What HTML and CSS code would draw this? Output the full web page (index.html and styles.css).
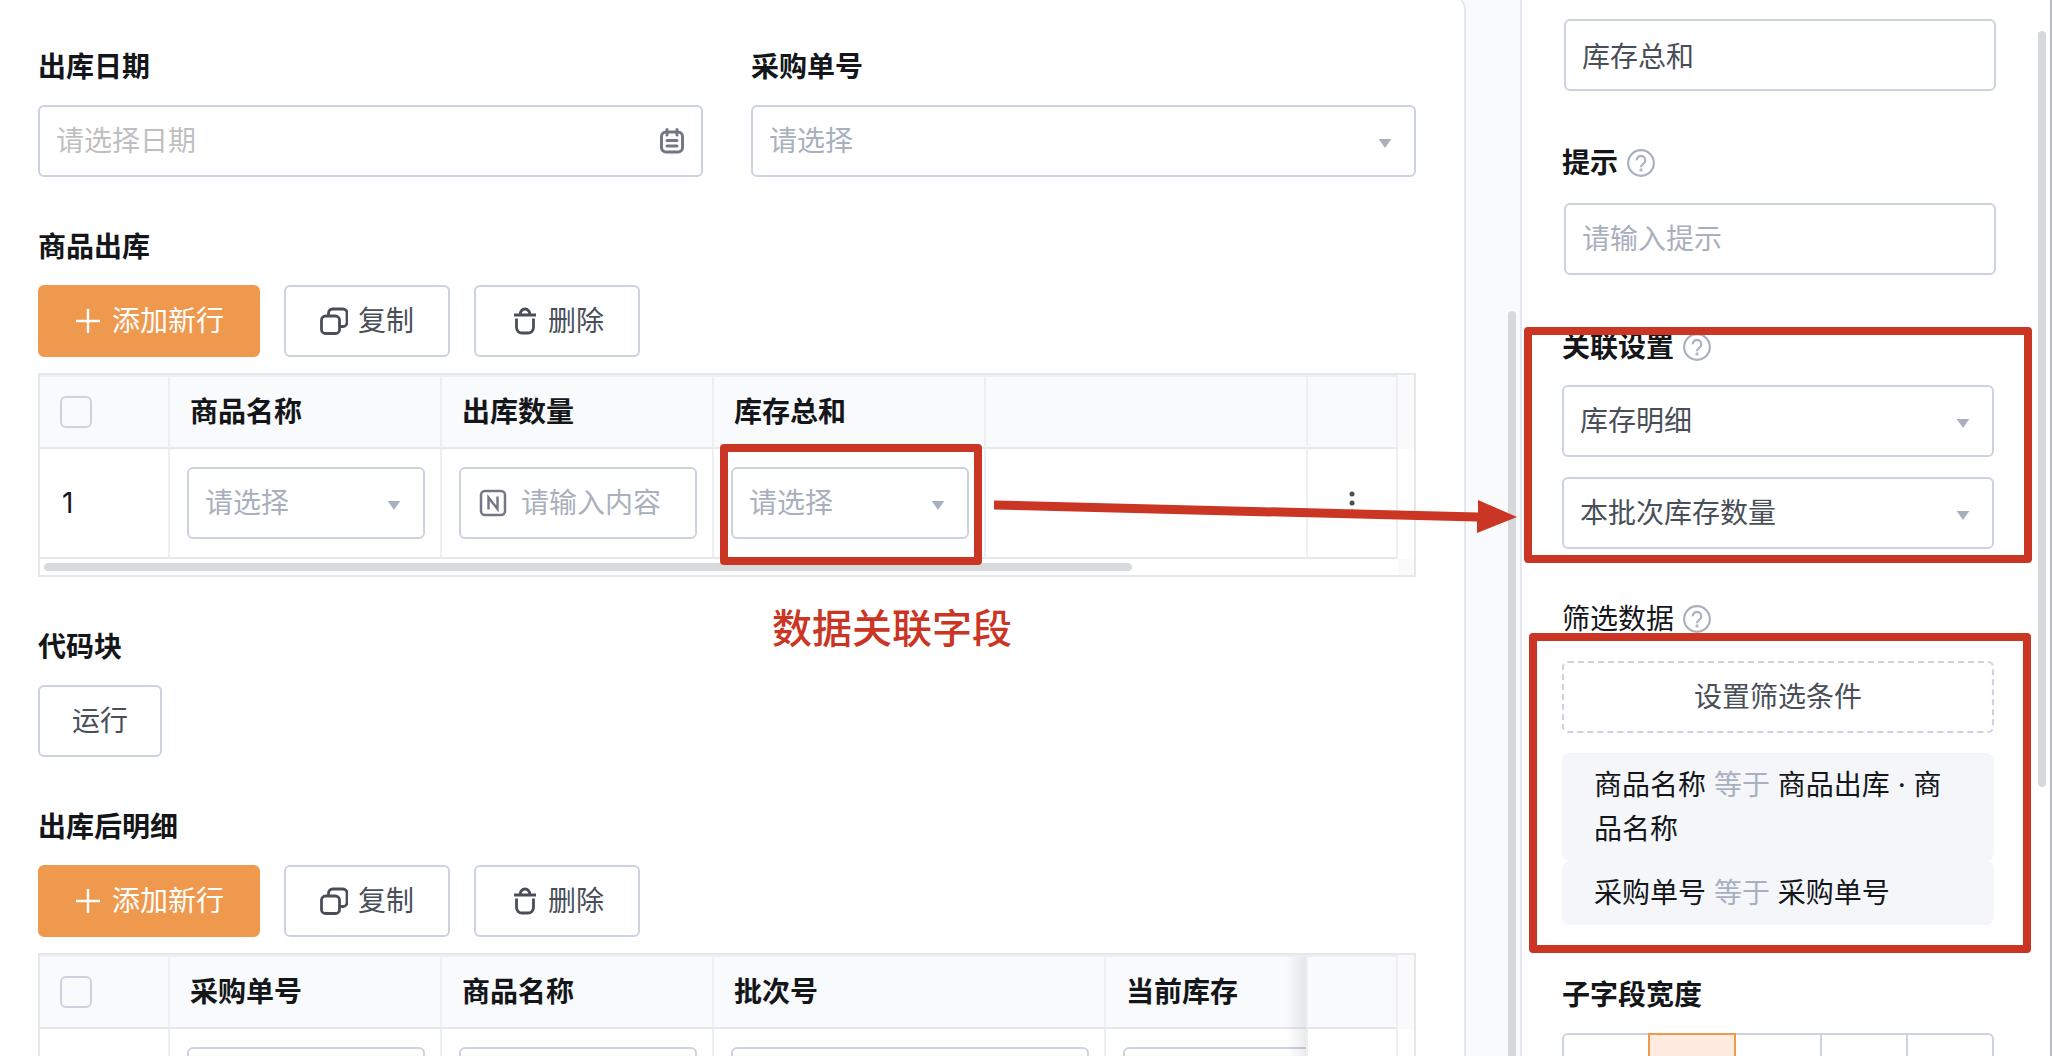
FILE: index.html
```html
<!DOCTYPE html>
<html lang="zh-CN">
<head>
  <meta charset="UTF-8">
  <meta name="viewport" content="width=device-width, initial-scale=1.0">
  <title>商品出库</title>
  <link rel="stylesheet" href="styles.css">
</head>
<body>
  <!-- shared icons -->
  <svg class="icon-defs" aria-hidden="true">
    <symbol id="icon-plus" viewBox="0 0 28 28">
      <path d="M14 2v24M2 14h24" stroke-width="2.4" />
    </symbol>
    <symbol id="icon-copy" viewBox="0 0 28 28">
      <rect x="1.5" y="9" width="18" height="17.500" rx="4" />
      <path d="M8.500 9V6a4 4 0 0 1 4-4H23a4 4 0 0 1 4 4v9.500a4 4 0 0 1-4 4h-3.500" />
    </symbol>
    <symbol id="icon-trash" viewBox="0 0 28 28">
      <path d="M4 8h22M10 8a5 6 0 0 1 10 0M6.500 11.500v9a5.500 5.500 0 0 0 5.500 5.500h6a5.500 5.500 0 0 0 5.500-5.500v-9" />
    </symbol>
    <symbol id="icon-date" viewBox="0 0 28 28">
      <rect x="3.5" y="5" width="21" height="20" rx="4.500" />
      <path d="M9 2.500v5.500M19 2.500v5.500M9 13.500h10M9 19h10" stroke-linecap="round" />
    </symbol>
    <symbol id="icon-number" viewBox="0 0 28 28">
      <rect x="2" y="2" width="24" height="24" rx="4" />
      <path d="M9.500 20.500V8.500l9 11.500V7.500" stroke-width="2.400" />
    </symbol>
    <symbol id="icon-help" viewBox="0 0 28 28">
      <circle cx="14" cy="14" r="12" />
      <path d="M10 11.500a4 4 0 1 1 6.500 3c-1.500 1.200-2.500 1.800-2.500 3.500" />
      <circle cx="14" cy="20.500" r="0.500" />
    </symbol>
    <symbol id="icon-caret" viewBox="0 0 14 10">
      <path d="M0 0h14L7 10z" />
    </symbol>
  </svg>

  <main class="workspace">
    <form class="form-card">
      <div class="field-row">
        <div class="field">
          <label class="field-label" for="out-date">出库日期</label>
          <div class="control">
            <input class="input input-date" id="out-date" type="text" placeholder="请选择日期">
            <svg class="date-icon"><use href="#icon-date" /></svg>
          </div>
        </div>
        <div class="field">
          <label class="field-label" for="purchase-no">采购单号</label>
          <div class="control">
            <select class="input select is-empty" id="purchase-no">
              <option>请选择</option>
            </select>
            <svg class="caret"><use href="#icon-caret" /></svg>
          </div>
        </div>
      </div>

      <section class="field">
        <h2 class="field-label">商品出库</h2>
        <div class="toolbar">
          <button type="button" class="btn btn-primary"><svg class="btn-icon"><use href="#icon-plus" /></svg>添加新行</button>
          <button type="button" class="btn"><svg class="btn-icon"><use href="#icon-copy" /></svg>复制</button>
          <button type="button" class="btn"><svg class="btn-icon"><use href="#icon-trash" /></svg>删除</button>
        </div>
        <div class="subform">
          <table class="subform-table">
            <colgroup>
              <col class="col-index">
              <col class="col-field">
              <col class="col-field">
              <col class="col-field">
              <col>
              <col class="col-action">
              <col class="col-gutter">
            </colgroup>
            <thead>
              <tr>
                <th><input class="checkbox" type="checkbox" aria-label="全选"></th>
                <th>商品名称</th>
                <th>出库数量</th>
                <th>库存总和</th>
                <th></th>
                <th></th>
                <th class="gutter"></th>
              </tr>
            </thead>
            <tbody>
              <tr>
                <td class="row-index">1</td>
                <td>
                  <div class="control">
                    <select class="input select is-empty" aria-label="商品名称">
                      <option>请选择</option>
                    </select>
                    <svg class="caret"><use href="#icon-caret" /></svg>
                  </div>
                </td>
                <td>
                  <div class="control">
                    <input class="input input-number" type="text" placeholder="请输入内容" aria-label="出库数量">
                    <svg class="number-icon"><use href="#icon-number" /></svg>
                  </div>
                </td>
                <td class="anchor">
                  <div class="control">
                    <select class="input select is-empty" aria-label="库存总和">
                      <option>请选择</option>
                    </select>
                    <svg class="caret"><use href="#icon-caret" /></svg>
                  </div>
                  <div class="mark mark-cell"></div>
                  <svg class="mark-arrow" viewBox="0 0 524 36">
                    <path d="M0 1.500 484 13.500V1L523 18 483 34V22.500L0 10.500z" />
                  </svg>
                  <p class="mark-text">数据关联字段</p>
                </td>
                <td></td>
                <td class="cell-action">
                  <button type="button" class="more-btn" aria-label="更多">
                    <svg viewBox="0 0 8 24"><circle cx="4" cy="3" r="2.500" /><circle cx="4" cy="12" r="2.500" /><circle cx="4" cy="21" r="2.500" /></svg>
                  </button>
                </td>
                <td class="gutter"></td>
              </tr>
            </tbody>
          </table>
          <div class="scroll-x"><div class="scroll-x-thumb"></div></div>
        </div>
      </section>

      <section class="field">
        <h2 class="field-label">代码块</h2>
        <div class="toolbar">
          <button type="button" class="btn btn-plain">运行</button>
        </div>
      </section>

      <section class="field">
        <h2 class="field-label">出库后明细</h2>
        <div class="toolbar">
          <button type="button" class="btn btn-primary"><svg class="btn-icon"><use href="#icon-plus" /></svg>添加新行</button>
          <button type="button" class="btn"><svg class="btn-icon"><use href="#icon-copy" /></svg>复制</button>
          <button type="button" class="btn"><svg class="btn-icon"><use href="#icon-trash" /></svg>删除</button>
        </div>
        <div class="subform">
          <table class="subform-table">
            <colgroup>
              <col class="col-index">
              <col class="col-field">
              <col class="col-field">
              <col class="col-batch">
              <col>
              <col class="col-action">
              <col class="col-gutter">
            </colgroup>
            <thead>
              <tr>
                <th><input class="checkbox" type="checkbox" aria-label="全选"></th>
                <th>采购单号</th>
                <th>商品名称</th>
                <th>批次号</th>
                <th class="cell-cut">当前库存</th>
                <th class="cell-fixed"></th>
                <th class="gutter"></th>
              </tr>
            </thead>
            <tbody>
              <tr>
                <td class="row-index"></td>
                <td><input class="input" type="text" aria-label="采购单号"></td>
                <td><input class="input" type="text" aria-label="商品名称"></td>
                <td><input class="input" type="text" aria-label="批次号"></td>
                <td class="cell-cut"><input class="input input-cut" type="text" aria-label="当前库存"></td>
                <td class="cell-fixed"></td>
                <td class="gutter"></td>
              </tr>
            </tbody>
          </table>
        </div>
      </section>
    </form>
    <div class="scroll-y workspace-scroll"></div>
  </main>

  <aside class="panel">
    <div class="setting">
      <div class="text-field">
        <input class="input" type="text" value="库存总和" aria-label="标题">
      </div>
    </div>

    <div class="setting">
      <label class="field-label" for="hint">提示<svg class="help-icon"><use href="#icon-help" /></svg></label>
      <div class="text-field">
        <input class="input" id="hint" type="text" placeholder="请输入提示">
      </div>
    </div>

    <div class="setting anchor">
      <label class="field-label" for="relation-form">关联设置<svg class="help-icon"><use href="#icon-help" /></svg></label>
      <div class="select-list">
        <div class="control">
          <select class="input select" id="relation-form">
            <option>库存明细</option>
          </select>
          <svg class="caret"><use href="#icon-caret" /></svg>
        </div>
        <div class="control">
          <select class="input select" aria-label="关联字段">
            <option>本批次库存数量</option>
          </select>
          <svg class="caret"><use href="#icon-caret" /></svg>
        </div>
      </div>
      <div class="mark mark-relation"></div>
    </div>

    <div class="setting setting-filter anchor">
      <h3 class="field-label label-regular">筛选数据<svg class="help-icon"><use href="#icon-help" /></svg></h3>
      <button type="button" class="btn btn-dashed">设置筛选条件</button>
      <ul class="conditions">
        <li>商品名称 <span class="operator">等于</span> 商品出库 · 商品名称</li>
        <li>采购单号 <span class="operator">等于</span> 采购单号</li>
      </ul>
      <div class="mark mark-filter"></div>
    </div>

    <div class="setting">
      <h3 class="field-label">子字段宽度</h3>
      <div class="segments">
        <button type="button" class="segment" aria-label="宽度 1"></button>
        <button type="button" class="segment active" aria-label="宽度 2"></button>
        <button type="button" class="segment" aria-label="宽度 3"></button>
        <button type="button" class="segment" aria-label="宽度 4"></button>
        <button type="button" class="segment" aria-label="宽度 5"></button>
      </div>
    </div>
    <div class="scroll-y panel-scroll"></div>
  </aside>
</body>
</html>
```
FILE: styles.css
```css
* {
  margin: 0;
  padding: 0;
  box-sizing: border-box;
}

body {
  display: flex;
  height: 100vh;
  overflow: hidden;
  font-family: Inter, "Noto Sans CJK SC", sans-serif;
  font-size: 28px;
  line-height: 44px;
  color: #141619;
  background: #f9fafc;
}

button,
input,
select {
  font: inherit;
}

svg {
  display: block;
  fill: none;
  stroke: currentColor;
  stroke-width: 2.5;
}

.icon-defs {
  position: absolute;
  width: 0;
  height: 0;
}

/* Layout */

.workspace {
  position: relative;
  z-index: 1;
  flex: 1;
  min-width: 0;
}

.form-card {
  display: flex;
  flex-direction: column;
  gap: 48px;
  min-height: 110vh;
  margin: -6px 54px 0 0;
  padding: 49px 48px 0 38px;
  background: #ffffff;
  border: 2px solid #e4e8ee;
  border-left: 0;
  border-radius: 0 16px 0 0;
}

.panel {
  position: relative;
  display: flex;
  flex-direction: column;
  gap: 48px;
  flex: 0 0 532px;
  padding: 17px 56px 0 40px;
  background: #ffffff;
  border-left: 2px solid #e4e8ee;
  border-right: 2px solid #b9babc;
}

.field-row {
  display: grid;
  grid-template-columns: 1fr 1fr;
  gap: 48px;
}

.field,
.setting {
  display: flex;
  flex-direction: column;
  gap: 16px;
}

.setting-filter {
  gap: 20px;
}

.field-label {
  display: flex;
  align-items: center;
  gap: 8px;
  font-size: 28px;
  font-weight: 600;
}

.label-regular {
  font-weight: 400;
}

.help-icon {
  width: 30px;
  height: 30px;
  color: #a9b0bd;
  stroke-width: 2;
}

/* Controls */

.control {
  position: relative;
}

.input {
  display: block;
  width: 100%;
  height: 72px;
  padding: 0 16px;
  border: 2px solid #ccd2e0;
  border-radius: 6px;
  background: #ffffff;
  color: #494f58;
  outline: none;
}

.input::placeholder {
  color: #a9b0bd;
  opacity: 1;
}

.select {
  appearance: none;
  cursor: pointer;
}

.is-empty {
  color: #a9b0bd;
}

.input-date::placeholder {
  color: #bfbfbf;
}

.input-number {
  padding-left: 60px;
}

.caret {
  position: absolute;
  top: 34px;
  right: 24px;
  width: 14px;
  height: 9px;
  fill: #a9b0bd;
  stroke: none;
  pointer-events: none;
}

.date-icon {
  position: absolute;
  top: 22px;
  right: 17px;
  width: 28px;
  height: 28px;
  color: #717784;
  stroke-width: 3;
}

.number-icon {
  position: absolute;
  top: 22px;
  left: 20px;
  width: 28px;
  height: 28px;
  color: #717784;
}

.toolbar {
  display: flex;
  gap: 24px;
}

.btn {
  display: flex;
  align-items: center;
  justify-content: center;
  gap: 10px;
  height: 72px;
  padding: 0 34px;
  border: 2px solid #ccd2e0;
  border-radius: 6px;
  background: #ffffff;
  color: #494f58;
  cursor: pointer;
}

.btn-primary {
  border-color: #ef994e;
  background: #ef994e;
  color: #ffffff;
}

.btn-plain {
  padding: 0 32px;
}

.btn-dashed {
  border-style: dashed;
}

.btn-icon {
  width: 28px;
  height: 28px;
  stroke-width: 2.8;
}

.checkbox {
  display: block;
  appearance: none;
  width: 32px;
  height: 32px;
  border: 2px solid #ccd2e0;
  border-radius: 6px;
}

/* Subform table */

.subform {
  border: 2px solid #e4e7ec;
}

.subform-table {
  width: 100%;
  table-layout: fixed;
  border-collapse: separate;
  border-spacing: 0;
}

.col-index {
  width: 130px;
}

.col-field {
  width: 272px;
}

.col-batch {
  width: 392px;
}

.col-action {
  width: 90px;
}

.col-gutter {
  width: 16px;
}

.subform-table th {
  height: 74px;
  padding: 0 20px;
  border-top: 2px solid #edf0f3;
  border-right: 2px solid #edeff2;
  border-bottom: 2px solid #e4e7ec;
  background: #f9fafc;
  font-weight: 600;
  text-align: left;
}

.subform-table td {
  height: 110px;
  padding: 0 15px 0 17px;
  border-right: 2px solid #edeff2;
  border-bottom: 2px solid #e4e7ec;
}

.subform-table .row-index {
  padding-left: 22px;
}

.subform-table .gutter {
  padding: 0;
  border: 0;
}

.subform-table th.gutter {
  background: #fafafa;
}

.subform-table .cell-action {
  padding: 0;
}

.subform-table .cell-cut {
  overflow: hidden;
  padding-right: 0;
}

.input-cut {
  width: 238px;
}

.cell-fixed {
  position: relative;
}

.cell-fixed::before {
  content: "";
  position: absolute;
  top: 0;
  bottom: -2px;
  left: -22px;
  width: 20px;
  background: linear-gradient(to right, rgba(60, 60, 80, 0), rgba(60, 60, 80, 0.1));
}

.more-btn {
  display: block;
  margin: 0 auto;
  padding: 8px;
  border: 0;
  background: none;
  color: #494f58;
  cursor: pointer;
}

.more-btn svg {
  width: 8px;
  height: 24px;
  fill: currentColor;
  stroke: none;
}

/* Scrollbars */

.scroll-x {
  height: 16px;
  margin-right: 16px;
  padding: 4px;
  box-shadow: 16px 0 #fafafa;
  background: #ffffff;
}

.scroll-x-thumb {
  width: calc(80% + 8px);
  height: 8px;
  border-radius: 4px;
  background: #d9dadc;
}

.scroll-y {
  position: absolute;
  right: 4px;
  width: 8px;
  border-radius: 4px;
  background: #d7d8db;
}

.workspace-scroll {
  top: 311px;
  bottom: -8px;
}

.panel-scroll {
  top: 31px;
  height: 756px;
}

/* Settings panel */

.text-field {
  margin-right: -2px;
  padding: 2px 0 2px 2px;
}

.select-list {
  display: flex;
  flex-direction: column;
  gap: 20px;
}

.conditions {
  list-style: none;
}

.conditions li {
  padding: 10px 32px;
  border-radius: 8px;
  background: #f4f6fa;
}

.operator {
  color: #a9b0bd;
}

.segments {
  display: flex;
  height: 72px;
  border: 2px solid #ccd2e0;
  border-radius: 6px;
}

.segment {
  flex: 1;
  border: 0;
  border-right: 2px solid #ccd2e0;
  background: none;
}

.segment:last-child {
  border-right: 0;
}

.segment.active {
  margin: -2px 0 -2px -2px;
  border: 2px solid #ef994e;
  background: #fcebde;
}

/* Red annotations */

.anchor {
  position: relative;
}

.mark {
  position: absolute;
  z-index: 2;
  border: 8px solid #ca3524;
  border-radius: 4px;
  pointer-events: none;
}

.mark-cell {
  top: -5px;
  right: 2px;
  bottom: -8px;
  left: 6px;
}

.mark-relation {
  top: 2px;
  right: -38px;
  bottom: -14px;
  left: -38px;
}

.mark-filter {
  top: 36px;
  right: -37px;
  bottom: -28px;
  left: -33px;
}

.mark-arrow {
  position: absolute;
  z-index: 2;
  top: 50px;
  left: 280px;
  width: 524px;
  height: 36px;
  fill: #ca3524;
  stroke: none;
  pointer-events: none;
}

.mark-text {
  position: absolute;
  top: 150px;
  left: 58px;
  font-size: 40px;
  font-weight: 500;
  line-height: 60px;
  color: #ca3524;
  white-space: nowrap;
}
```
